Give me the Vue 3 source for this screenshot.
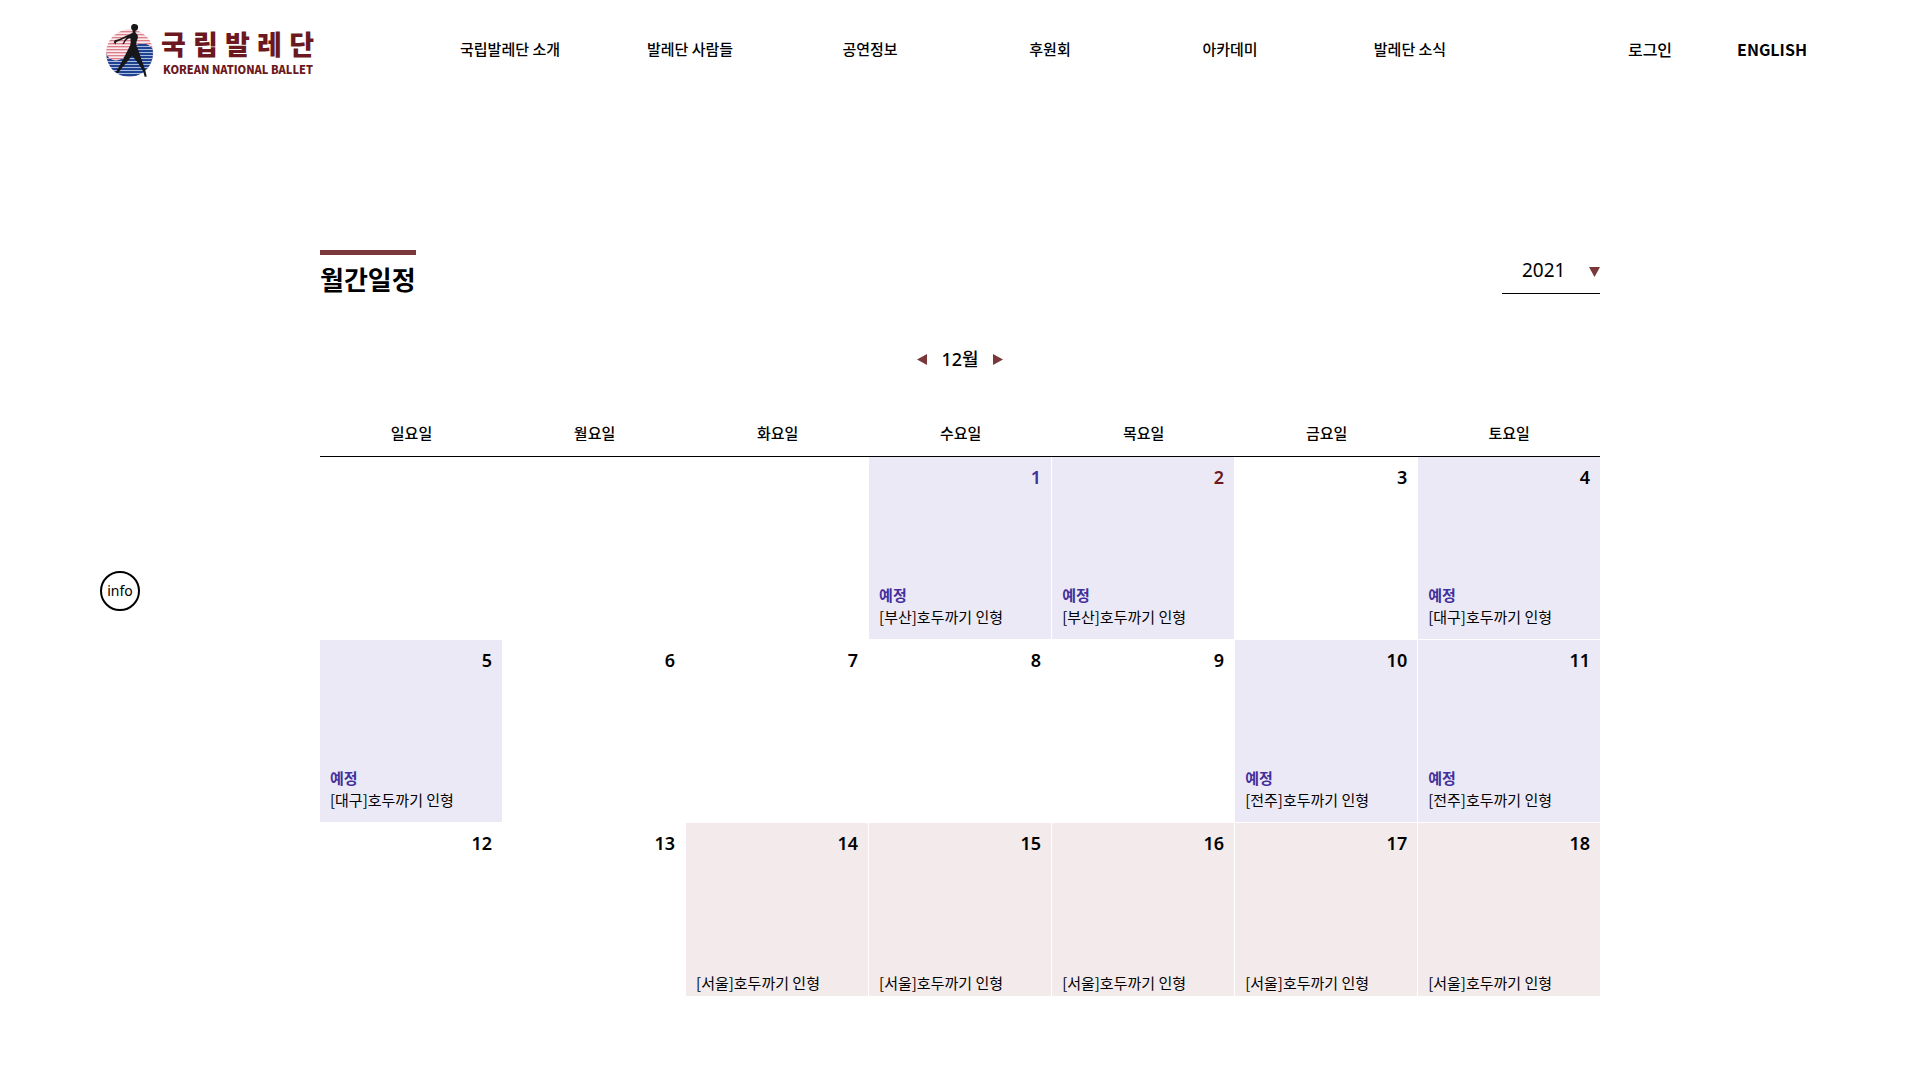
<script setup>
import { ref } from 'vue'

const menus = ['국립발레단 소개', '발레단 사람들', '공연정보', '후원회', '아카데미', '발레단 소식']
const weekdays = ['일요일', '월요일', '화요일', '수요일', '목요일', '금요일', '토요일']
const years = ['2020', '2021', '2022']
const year = ref('2021')
const brand = ['국', '립', '발', '레', '단']

const plan = (day, city, tone = '') => ({ day, tone, type: 'tour', status: '예정', title: `[${city}]호두까기 인형` })
const seoul = (day) => ({ day, tone: '', type: 'home', status: '', title: '[서울]호두까기 인형' })
const plain = (day) => ({ day, tone: '', type: '', status: '', title: '' })

const weeks = [
  [plain(''), plain(''), plain(''), plan(1, '부산', 'today'), plan(2, '부산', 'picked'), plain(3), plan(4, '대구')],
  [plan(5, '대구'), plain(6), plain(7), plain(8), plain(9), plan(10, '전주'), plan(11, '전주')],
  [plain(12), plain(13), seoul(14), seoul(15), seoul(16), seoul(17), seoul(18)],
]
</script>

<template>
  <div class="page">
    <header class="header">
      <a href="#" class="logo">
        <svg class="emblem" viewBox="45 36 150 168" aria-hidden="true">
          <defs>
            <pattern id="redStripes" width="10" height="9" patternUnits="userSpaceOnUse">
              <rect width="10" height="9" fill="#fbe9eb" />
              <rect width="10" height="4" fill="#dc7f8c" />
            </pattern>
            <pattern id="blueStripes" width="10" height="9" patternUnits="userSpaceOnUse">
              <rect width="10" height="9" fill="#1f4391" />
              <rect width="10" height="3" fill="#a9bce0" />
            </pattern>
          </defs>
          <circle cx="119" cy="129" r="71" fill="url(#redStripes)" />
          <path d="M49 129C55 150 78 158 98 145C119 130 120 106 150 101C167 99 181 106 188 117C195 165 160 200 119 200C78 200 49 170 49 129Z" fill="url(#blueStripes)" />
          <g fill="#171619">
            <path d="M124 48C126 40 142 40 144 49C146 57 141 62 136 63L137 69C145 74 145 83 141 91C138 99 138 105 141 112C146 120 149 132 153 145C158 160 166 175 170 200L164 200C161 184 153 173 144 159C137 149 131 142 126 137C116 149 108 160 98 171C92 179 87 184 85 190L77 187C85 174 91 164 98 150C105 137 110 127 115 117C120 109 122 103 122 96L121 84C112 86 106 92 102 102L97 103L104 89L111 82C98 88 88 93 79 96L76 104L73 98L70 102L74 91C90 88 104 78 116 74L128 68L128 62C124 58 122 53 124 48Z" />
          </g>
        </svg>
        <span class="wordmark">
          <span class="brand-ko"><span v-for="c in brand" :key="c">{{ c }}</span></span>
          <span class="brand-en"><span>KOREAN</span><span>NATIONAL</span><span>BALLET</span></span>
        </span>
      </a>
      <nav class="menu">
        <a v-for="m in menus" :key="m" href="#">{{ m }}</a>
      </nav>
      <div class="utils">
        <a href="#">로그인</a>
        <a href="#" class="lang">ENGLISH</a>
      </div>
    </header>

    <main class="content">
      <div class="heading">
        <h1>월간일정</h1>
        <div class="year">
          <select v-model="year" aria-label="연도">
            <option v-for="y in years" :key="y">{{ y }}</option>
          </select>
          <svg class="caret" viewBox="0 0 11 10" aria-hidden="true"><path d="M0 0H11L5.5 10Z" /></svg>
        </div>
      </div>

      <div class="month">
        <button type="button" aria-label="이전 달"><svg viewBox="0 0 10 11"><path d="M10 0V11L0 5.5Z" /></svg></button>
        <strong>12월</strong>
        <button type="button" aria-label="다음 달"><svg viewBox="0 0 10 11"><path d="M0 0V11L10 5.5Z" /></svg></button>
      </div>

      <div class="calendar">
        <table>
          <thead>
            <tr>
              <th v-for="w in weekdays" :key="w" scope="col">{{ w }}</th>
            </tr>
          </thead>
          <tbody>
            <tr v-for="(week, i) in weeks" :key="i">
              <td v-for="(cell, j) in week" :key="j" :class="cell.type">
                <div class="cell">
                  <span class="day" :class="cell.tone">{{ cell.day }}</span>
                  <a v-if="cell.title" href="#" class="event">
                    <em v-if="cell.status">{{ cell.status }}</em>
                    <span>{{ cell.title }}</span>
                  </a>
                </div>
              </td>
            </tr>
          </tbody>
        </table>
      </div>
    </main>

    <button type="button" class="info">info</button>
  </div>
</template>

<style>
body {
  margin: 0;
  background: #fff;
}
</style>

<style scoped>
.page {
  font-family: "Noto Sans CJK KR", sans-serif;
  font-size: 15px;
  font-weight: 500;
  line-height: 22px;
  color: #000;
}
a {
  color: inherit;
  text-decoration: none;
}
button {
  padding: 0;
  border: 0;
  background: none;
  color: inherit;
  cursor: pointer;
}
.header {
  display: flex;
  align-items: center;
  height: 98px;
  padding: 0 113px 0 105px;
}
.logo {
  display: flex;
  flex: 0 0 315px;
  gap: 6px;
  padding-top: 2px;
  color: #6b1820;
}
.emblem {
  width: 50px;
  height: 56px;
}
.wordmark {
  display: flex;
  flex-direction: column;
  width: 153px;
  padding-top: 5px;
}
.brand-ko {
  display: flex;
  justify-content: space-between;
  font-size: 27px;
  font-weight: 900;
  line-height: 34px;
}
.brand-en {
  display: flex;
  justify-content: space-between;
  padding: 0 1px 0 2px;
  font-size: 11px;
  font-weight: 900;
  line-height: 16px;
}
.menu {
  display: grid;
  flex: 1;
  grid-template-columns: repeat(6, 1fr);
  text-align: center;
}
.utils {
  display: flex;
  flex: 0 0 307px;
  justify-content: flex-end;
  gap: 65px;
  font-size: 16px;
}
.lang {
  font-weight: 700;
}
.content {
  max-width: 1280px;
  margin: 0 auto;
  padding: 152px 0 84px;
}
.heading {
  display: flex;
  align-items: flex-start;
  justify-content: space-between;
}
h1 {
  margin: 0;
  border-top: 5px solid #7a383b;
  font-size: 26px;
  font-weight: 700;
  line-height: 48px;
}
.year {
  position: relative;
  width: 98px;
  border-bottom: 1px solid #000;
}
.year select {
  display: block;
  width: 100%;
  height: 43px;
  padding: 0 0 4px 20px;
  border: 0;
  appearance: none;
  background: none;
  color: inherit;
  font-family: "Noto Sans", sans-serif;
  font-size: 19px;
  font-weight: 400;
}
.caret {
  position: absolute;
  top: 17px;
  right: 0;
  width: 11px;
  height: 10px;
  fill: #7a383b;
  pointer-events: none;
}
.month {
  display: flex;
  align-items: center;
  justify-content: center;
  gap: 14px;
  height: 32px;
  margin: 40px 0 35px;
}
.month strong {
  font-family: "Noto Sans", "Noto Sans CJK KR", sans-serif;
  font-size: 18px;
  font-weight: 500;
}
.month svg {
  display: block;
  width: 10px;
  height: 11px;
  fill: #7a383b;
}
.calendar {
  max-height: 586px;
  overflow: hidden;
}
table {
  width: 100%;
  table-layout: fixed;
  border-spacing: 0;
}
th {
  height: 46px;
  padding: 0;
  border-bottom: 1px solid #000;
  font-weight: 500;
}
th:not(:last-child) {
  width: 14.3%;
}
td {
  padding: 0;
  border: solid #fff;
  border-width: 0 1px 1px 0;
}
td:last-child {
  border-right: 0;
}
.tour {
  background: #ece9f6;
}
.home {
  background: #f3eaeb;
}
.cell {
  display: flex;
  flex-direction: column;
  justify-content: space-between;
  box-sizing: border-box;
  height: 182px;
  padding: 9px 10px 11px;
}
.day {
  align-self: flex-end;
  font-family: "Noto Sans", sans-serif;
  font-size: 18px;
  font-weight: 600;
}
.today {
  color: #43309c;
}
.picked {
  color: #6b1820;
}
.event {
  display: flex;
  flex-direction: column;
  font-weight: 400;
}
.event em {
  color: #43309c;
  font-style: normal;
  font-weight: 700;
}
.info {
  position: fixed;
  top: 571px;
  left: 100px;
  width: 40px;
  height: 40px;
  padding-bottom: 2px;
  border: 2px solid #000;
  border-radius: 50%;
  background: #fff;
  font-family: "Noto Sans", sans-serif;
  font-size: 14px;
  font-weight: 400;
}
</style>
